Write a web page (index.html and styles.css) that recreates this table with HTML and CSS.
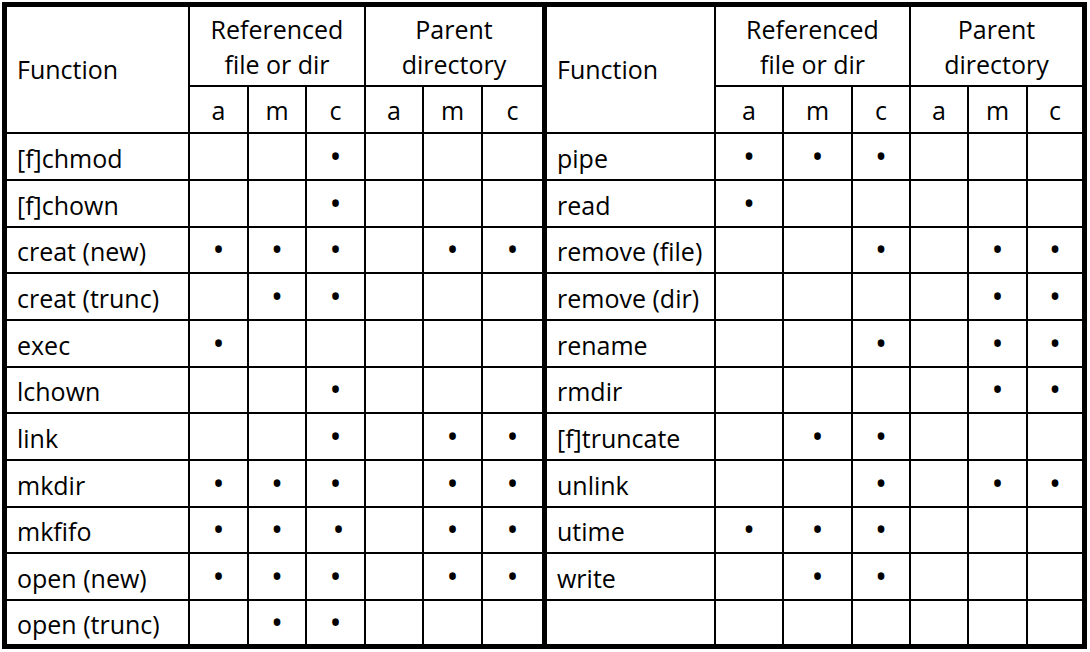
FILE: index.html
```html
<!DOCTYPE html>
<html>
<head>
<meta charset="utf-8">
<link rel="stylesheet" href="styles.css">
</head>
<body>
<div class="grid">
  <div class="c fn first top hdr">Function</div>
  <div class="c top grp">Referenced<br>file or dir</div>
  <div class="c top grp">Parent<br>directory</div>
  <div class="c fn mid top hdr">Function</div>
  <div class="c top grp">Referenced<br>file or dir</div>
  <div class="c top grp">Parent<br>directory</div>

  <div class="c s">a</div><div class="c s">m</div><div class="c s">c</div>
  <div class="c s">a</div><div class="c s">m</div><div class="c s">c</div>
  <div class="c s">a</div><div class="c s">m</div><div class="c s">c</div>
  <div class="c s">a</div><div class="c s">m</div><div class="c s">c</div>

  <div class="c fn first">[f]chmod</div><div class="c"></div><div class="c"></div><div class="c">•</div><div class="c"></div><div class="c"></div><div class="c"></div>
  <div class="c fn mid">pipe</div><div class="c">•</div><div class="c">•</div><div class="c">•</div><div class="c"></div><div class="c"></div><div class="c"></div>

  <div class="c fn first">[f]chown</div><div class="c"></div><div class="c"></div><div class="c">•</div><div class="c"></div><div class="c"></div><div class="c"></div>
  <div class="c fn mid">read</div><div class="c">•</div><div class="c"></div><div class="c"></div><div class="c"></div><div class="c"></div><div class="c"></div>

  <div class="c fn first">creat (new)</div><div class="c">•</div><div class="c">•</div><div class="c">•</div><div class="c"></div><div class="c">•</div><div class="c">•</div>
  <div class="c fn mid">remove (file)</div><div class="c"></div><div class="c"></div><div class="c">•</div><div class="c"></div><div class="c">•</div><div class="c">•</div>

  <div class="c fn first">creat (trunc)</div><div class="c"></div><div class="c">•</div><div class="c">•</div><div class="c"></div><div class="c"></div><div class="c"></div>
  <div class="c fn mid">remove (dir)</div><div class="c"></div><div class="c"></div><div class="c"></div><div class="c"></div><div class="c">•</div><div class="c">•</div>

  <div class="c fn first">exec</div><div class="c">•</div><div class="c"></div><div class="c"></div><div class="c"></div><div class="c"></div><div class="c"></div>
  <div class="c fn mid">rename</div><div class="c"></div><div class="c"></div><div class="c">•</div><div class="c"></div><div class="c">•</div><div class="c">•</div>

  <div class="c fn first">lchown</div><div class="c"></div><div class="c"></div><div class="c">•</div><div class="c"></div><div class="c"></div><div class="c"></div>
  <div class="c fn mid">rmdir</div><div class="c"></div><div class="c"></div><div class="c"></div><div class="c"></div><div class="c">•</div><div class="c">•</div>

  <div class="c fn first">link</div><div class="c"></div><div class="c"></div><div class="c">•</div><div class="c"></div><div class="c">•</div><div class="c">•</div>
  <div class="c fn mid">[f]truncate</div><div class="c"></div><div class="c">•</div><div class="c">•</div><div class="c"></div><div class="c"></div><div class="c"></div>

  <div class="c fn first">mkdir</div><div class="c">•</div><div class="c">•</div><div class="c">•</div><div class="c"></div><div class="c">•</div><div class="c">•</div>
  <div class="c fn mid">unlink</div><div class="c"></div><div class="c"></div><div class="c">•</div><div class="c"></div><div class="c">•</div><div class="c">•</div>

  <div class="c fn first">mkfifo</div><div class="c">•</div><div class="c">•</div><div class="c nudge">•</div><div class="c"></div><div class="c">•</div><div class="c">•</div>
  <div class="c fn mid">utime</div><div class="c">•</div><div class="c">•</div><div class="c">•</div><div class="c"></div><div class="c"></div><div class="c"></div>

  <div class="c fn first">open (new)</div><div class="c">•</div><div class="c">•</div><div class="c">•</div><div class="c"></div><div class="c">•</div><div class="c">•</div>
  <div class="c fn mid">write</div><div class="c"></div><div class="c">•</div><div class="c">•</div><div class="c"></div><div class="c"></div><div class="c"></div>

  <div class="c fn first">open (trunc)</div><div class="c"></div><div class="c">•</div><div class="c">•</div><div class="c"></div><div class="c"></div><div class="c"></div>
  <div class="c fn mid"></div><div class="c"></div><div class="c"></div><div class="c"></div><div class="c"></div><div class="c"></div><div class="c"></div>
</div>
</body>
</html>
```
FILE: styles.css
```css
html, body {
  margin: 0;
  padding: 0;
  background: #fff;
}
body {
  padding: 2px;
  font-family: "Open Sans", "Liberation Sans", sans-serif;
  font-size: 25px;
  color: #000;
}
.grid {
  display: inline-grid;
  border: 5px solid #000;
  grid-template-columns: 181px 59px 58px 59px 58px 59px 61px 172px 68px 69px 58px 58px 59px 56px;
  grid-template-rows: 78px 47px 47px 47px 46px 47px 47px 46px 47px 47px 46px 47px 45px;
}
.c {
  box-sizing: border-box;
  border-left: 2px solid #000;
  border-top: 2px solid #000;
  display: flex;
  align-items: center;
  justify-content: center;
  line-height: 1;
  white-space: nowrap;
  font-size: 32px;
  padding-bottom: 2px;
}
.c.fn,
.c.grp,
.c.s {
  font-size: 25px;
}
.c.top {
  border-top: 0;
}
.c.first {
  border-left: 0;
}
.c.mid {
  border-left: 5px solid #000;
}
.c.fn {
  justify-content: flex-start;
  padding-left: 10px;
  padding-bottom: 0;
  padding-top: 3px;
}
.c.fn.hdr {
  padding-top: 0;
}
.c.s {
  padding-bottom: 0;
  padding-top: 2px;
}
.hdr {
  grid-row: span 2;
}
.c.grp {
  grid-column: span 3;
  text-align: center;
  line-height: 35px;
  padding-top: 1px;
  padding-bottom: 0;
}
.nudge {
  padding-left: 6px;
}
```
